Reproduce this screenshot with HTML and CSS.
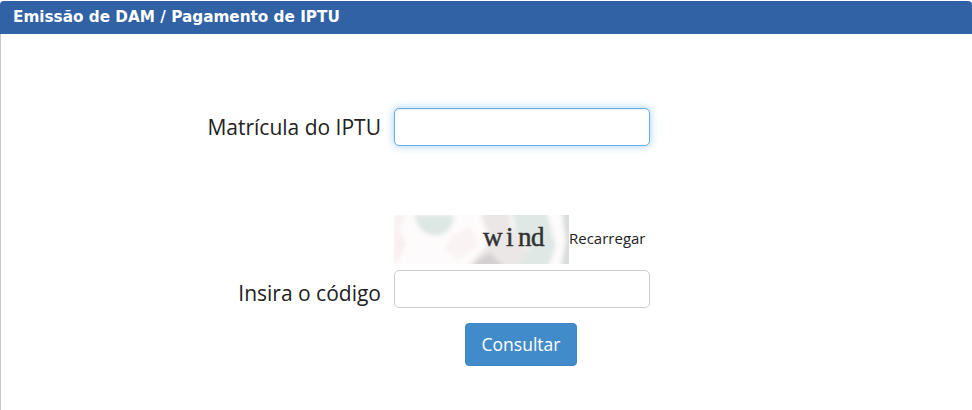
FILE: index.html
```html
<!DOCTYPE html>
<html lang="pt">
<head>
<meta charset="utf-8">
<title>Emissão de DAM / Pagamento de IPTU</title>
<link rel="stylesheet" href="styles.css">
</head>
<body>
<section class="panel">
  <h1 class="panel-title">Emissão de DAM / Pagamento de IPTU</h1>
  <form class="form">
    <div class="row row-first">
      <label class="label" for="matricula">Matrícula do IPTU</label>
      <input class="field field-focus" id="matricula" type="text">
    </div>
    <div class="captcha-row">
      <svg class="captcha" width="175" height="49" viewBox="0 0 175 49" role="img" aria-label="captcha">
        <defs><filter id="soft" x="-10%" y="-10%" width="120%" height="120%"><feGaussianBlur stdDeviation="2.2"/></filter></defs>
        <rect width="175" height="49" fill="#fdfbfb"/>
        <g filter="url(#soft)">
          <path d="M0 0H12L4 14L12 28L2 49H0Z" fill="#f8eff0"/>
          <path d="M60 20L76 12L84 30L64 44L50 34Z" fill="#faf3f3"/>
          <path d="M21 0H60C60 11 52 21 40 20C30 20 22 11 21 0Z" fill="#dde7e3"/>
          <path d="M88 -4H118C112 10 122 18 128 26L146 53H74C80 41 92 36 95 26C97 16 86 10 88 -4Z" fill="#ebe7e7"/>
          <path d="M118 -4H152C158 14 158 20 162 30L154 53H124L136 32L122 18Z" fill="#dfe8e4"/>
          <path d="M78 53C82 45 88 42 96 38L112 53Z" fill="#d4d0d1"/>
          <path d="M168 -4H180V53H167L172 26Z" fill="#d9dcdb"/>
        </g>
        <text class="captcha-text" x="89 112 124 137" y="31">wind</text>
      </svg>
      <a class="reload" href="#">Recarregar</a>
    </div>
    <div class="row">
      <label class="label label-end" for="codigo">Insira o código</label>
      <input class="field" id="codigo" type="text">
    </div>
    <div class="actions">
      <button class="button" type="button">Consultar</button>
    </div>
  </form>
</section>
</body>
</html>
```
FILE: styles.css
```css
html, body {
  margin: 0;
  padding: 0;
  height: 100%;
  background: #fff;
  overflow: hidden;
}
body {
  font-family: "Open Sans", sans-serif;
  color: #222;
}
.panel {
  margin-top: 1px;
  height: 409px;
  box-sizing: border-box;
  border-left: 1px solid #c8c8c8;
  border-radius: 4px 4px 0 0;
}
.panel-title {
  margin: 0 0 0 -1px;
  height: 33px;
  padding-left: 13px;
  box-sizing: border-box;
  background: #3162a6;
  border-radius: 4px 4px 0 0;
  color: #fff;
  font: bold 15.25px/33px "DejaVu Sans", sans-serif;
}
.form {
  padding-top: 74px;
}
.row {
  display: grid;
  grid-template-columns: 380px 256px;
  column-gap: 13px;
  align-items: center;
}
.label {
  text-align: right;
  font-size: 21px;
  line-height: 28px;
  color: #222;
}
.label-end {
  align-self: end;
  margin-bottom: 1px;
}
.field {
  height: 38px;
  box-sizing: border-box;
  padding: 6px 12px;
  border: 1px solid #ccc;
  border-radius: 5px;
  background: #fff;
  outline: none;
}
.field-focus {
  border-color: #66afe9;
  box-shadow: inset 0 1px 1px rgba(0,0,0,.075), 0 0 8px rgba(102,175,233,.6);
}
.captcha-row {
  display: flex;
  align-items: flex-end;
  margin: 69px 0 6px 393px;
  height: 49px;
}
.captcha {
  display: block;
  flex: none;
}
.captcha-text {
  font-family: "Liberation Serif", serif;
  font-size: 27px;
  fill: #333;
  stroke: #333;
  stroke-width: .5px;
}
.reload {
  margin-bottom: 16px;
  font-size: 15px;
  line-height: 19px;
  color: #222;
  text-decoration: none;
}
.actions {
  margin: 15px 0 0 464px;
}
.button {
  display: block;
  width: 112px;
  height: 43px;
  padding: 0 0 2px;
  border: 1px solid #3f85c5;
  border-radius: 4px;
  background: #428bca;
  color: #fff;
  font-family: "Open Sans", sans-serif;
  font-size: 17.5px;
}
```
